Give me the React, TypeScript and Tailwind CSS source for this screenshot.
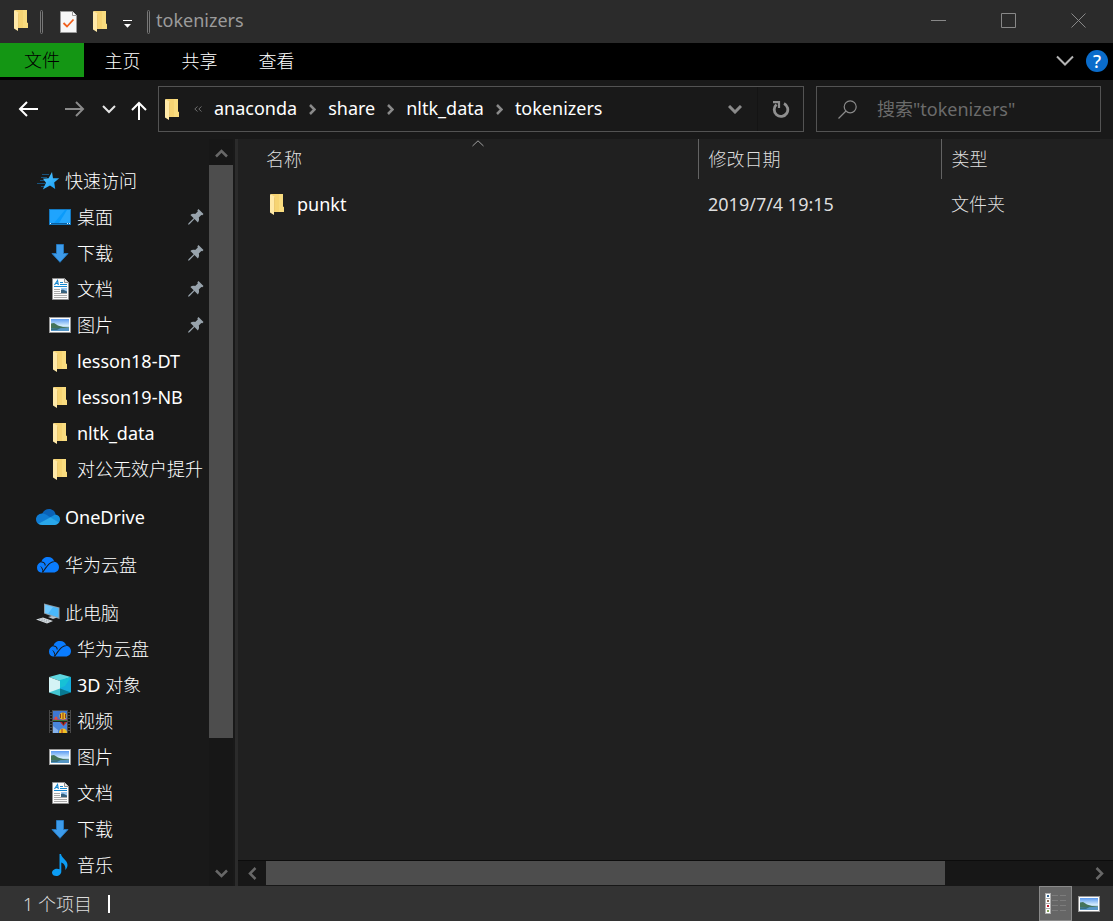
import { Fragment, ReactNode } from "react";

function FolderIcon() {
  return (
    <svg width="14" height="21" viewBox="0 0 14 21" aria-hidden="true" className="shrink-0">
      <path d="M1 0H13V12.5L14 13.5V18H1Z" fill="#f6d473" />
      <path d="M9 0H13V12.5L14 13.5V18H9Z" fill="#f9dc7f" />
      <path d="M0 0L4 2.2L5 3.5V18H4V21L0 18.6Z" fill="#ffe9a8" />
      <path d="M5 3.5V18H4.3V3Z" fill="#e6bd5a" />
    </svg>
  );
}

function CheckedPageIcon() {
  return (
    <svg width="17" height="22" viewBox="0 0 17 22" aria-hidden="true">
      <path d="M.5.5H12.5L16.5 4.5V21.5H.5Z" fill="#f7f7f7" stroke="#9a9a9a" />
      <path d="M12.5 .5V4.5H16.5" fill="#fff" stroke="#9a9a9a" />
      <path d="M3.5 12L7 15.5L13.5 8.5" fill="none" stroke="#f2611d" strokeWidth="1.8" />
    </svg>
  );
}

function StarIcon() {
  return (
    <svg width="24" height="18" viewBox="0 0 24 18" aria-hidden="true">
      <defs>
        <linearGradient id="star" x1="0" y1="0" x2="1" y2="1">
          <stop offset="0" stopColor="#5cc8ff" />
          <stop offset="1" stopColor="#0f9bf5" />
        </linearGradient>
      </defs>
      <path d="M6 2.5H13M5 5.5H11M4 8.5H10M1 11.5H9M5 14.5H9" stroke="#17527c" strokeWidth="1" />
      <path d="M16 0L17 6.2H23.2L18.2 10.4L19.2 17L14 13.4L6.8 17.5L10 10.8L7 6.8L12.6 6.2Z" fill="url(#star)" />
    </svg>
  );
}

function DesktopIcon() {
  return (
    <svg width="22" height="16" viewBox="0 0 22 16" aria-hidden="true">
      <rect x=".5" y=".5" width="21" height="15" fill="#0a9bfb" stroke="#1479c0" />
      <path d="M1 1H16L5 14H1Z" fill="#1fa4fe" />
      <path d="M18 1H21V14H10Z" fill="#28a8fd" />
      <path d="M1 14.5H21" stroke="#0b5f9e" />
      <path d="M1 14.5H2M18 14.5H19M20 14.5H21" stroke="#d8efff" />
    </svg>
  );
}

function DownloadIcon() {
  return (
    <svg width="18" height="19" viewBox="0 0 18 19" aria-hidden="true">
      <path d="M5.5.5H12.5V9.5H17L9 18.3L1 9.5H5.5Z" fill="#3d9bea" stroke="#2477bd" />
    </svg>
  );
}

function DocumentIcon() {
  return (
    <svg width="17" height="22" viewBox="0 0 17 22" aria-hidden="true">
      <path d="M.5.5H12.5L16.5 4.5V21.5H.5Z" fill="#fcfcfc" stroke="#8f8f8f" />
      <path d="M12.5.5V4.5H16.5" fill="#e7e7e7" stroke="#8f8f8f" />
      <path d="M2.5 7L5.5 2.5L6.3 7M4 5.5H6" fill="none" stroke="#1687cf" strokeWidth="1.2" />
      <path d="M8 4.5H11M8 6.5H15M2 8.5H15" stroke="#1687cf" />
      <path d="M2 11.5H8M2 13.5H8M2 15.5H15M2 17.5H15M2 19.5H15" stroke="#a9a9a9" />
      <rect x="9" y="10" width="6" height="5" fill="#9cc8f2" />
      <path d="M9 12L11 11.5L15 13.5V15H9Z" fill="#35617e" />
    </svg>
  );
}

function PictureIcon() {
  return (
    <svg width="22" height="16" viewBox="0 0 22 16" aria-hidden="true">
      <defs>
        <linearGradient id="sky" x1="0" y1="0" x2="0" y2="1">
          <stop offset="0" stopColor="#5b9bf2" />
          <stop offset=".55" stopColor="#d2ebfc" />
          <stop offset="1" stopColor="#3f7fb4" />
        </linearGradient>
      </defs>
      <rect x=".5" y=".5" width="21" height="15" fill="#fff" stroke="#989898" />
      <rect x="2" y="2" width="18" height="12" fill="url(#sky)" />
      <path d="M2 6.5L5 6L9 8.5L14 10L20 10.5V11.5L2 11.8Z" fill="#44745a" />
      <path d="M2 11.5L20 11V14H2Z" fill="#5596c6" />
      <path d="M2 11.5L12 10.8L8 13H2Z" fill="#376f7d" />
    </svg>
  );
}

function OneDriveIcon() {
  return (
    <svg width="24" height="16" viewBox="0 0 24 16" aria-hidden="true">
      <path d="M6 5C7.5 1.8 10 0 13 0C16.500 0 19 2.300 19.600 5.500L15 9Z" fill="#0a62b8" />
      <path d="M5.800 4.500C2.500 4.700 0 7.300 0 10.300C0 12.400 1 14 2.300 15L15 8.700L10 5.500C8.600 4.700 7.200 4.400 5.800 4.500Z" fill="#0f7cd4" />
      <path d="M14 8.500L19 5.500C22 5.600 24 7.800 24 10.300C24 12 23.500 13 22.700 14Z" fill="#1590df" />
      <path d="M2.200 14.800L14.500 8.200L23 13.600C22 15.200 20.500 16 19 16H6C4.500 16 3.300 15.600 2.200 14.800Z" fill="#29a7ea" />
    </svg>
  );
}

function HuaweiCloudIcon() {
  return (
    <svg width="22" height="16" viewBox="0 0 22 16" aria-hidden="true">
      <path
        d="M4.500 5C5 2 7.500 0 11 0C14.300 0 16.700 2 17.200 4.700C20 5 22 7.200 22 10C22 13.200 19.700 15.500 16.500 15.500H4C1.500 15.500 0 13.300 0 10.500C0 7.800 1.800 5.500 4.500 5Z"
        fill="#0a7cff"
      />
      <path
        d="M4.300 5C7 5 8.200 7 8.200 8.500M16.800 4.700C13 4.700 11.500 7.500 9.300 10.200L5.500 15.500"
        fill="none"
        stroke="#191919"
        strokeWidth="1.100"
      />
      <path d="M3.800 9.500C5.200 11 6 13 5.800 15" fill="none" stroke="#191919" />
    </svg>
  );
}

function ComputerIcon() {
  return (
    <svg width="24" height="21" viewBox="0 0 24 21" aria-hidden="true">
      <path d="M8 .5L23.500 4.500V16L8 10.500Z" fill="#8fa0ac" />
      <path d="M9 1.800L22.500 5.300V14.500L9 9.800Z" fill="#49b8fb" />
      <path d="M9 1.800L17 3.900L12 10.800L9 9.800Z" fill="#72caff" />
      <path d="M12 14L16 13L21 14.500L17 16Z" fill="#b9c2c9" />
      <path d="M0 16.500L7 14.500L17 18L11 20.500Z" fill="#d9dfe3" />
      <path d="M3 16.500L12 19.300M5.500 15.700L14.500 18.500" stroke="#8e999f" strokeWidth=".8" strokeDasharray="1.500 .8" />
    </svg>
  );
}

function CubeIcon() {
  return (
    <svg width="22" height="22" viewBox="0 0 22 22" aria-hidden="true">
      <path d="M0 3L11 0L22 3L11 7Z" fill="#5fd6e0" />
      <path d="M0 3L11 7V18L0 18.500Z" fill="#d4f3f5" />
      <path d="M22 3L11 7V17L22 18.500Z" fill="#15aede" />
      <path d="M11 6L22 3L16 12L11 14Z" fill="#16c1d6" />
      <path d="M0 18.500L11 14.500V22Z" fill="#43c5d1" />
      <path d="M22 18.500L11 14.500V22Z" fill="#087992" />
    </svg>
  );
}

function VideoIcon() {
  return (
    <svg width="22" height="23" viewBox="0 0 22 23" aria-hidden="true">
      <rect width="22" height="23" fill="#4a4a4a" />
      <path d="M2 0V23M20 0V23" stroke="#151515" strokeWidth="2" strokeDasharray="2 1" />
      <rect x="4" y="1" width="14" height="10" fill="#3f78d4" />
      <rect x="4" y="12" width="14" height="11" fill="#4a86dc" />
      <path d="M4 9L7 8L11 9.500L18 9V11H4Z" fill="#a34b78" />
      <path d="M4 10H18V11H4Z" fill="#3d7c3c" />
      <path d="M4 11.500H18" stroke="#222" />
      <circle cx="14" cy="6" r="3.500" fill="#efb821" />
      <path d="M14 2.500V9M11.500 4V8M16.500 4V8" stroke="#8a3a1d" />
      <circle cx="7" cy="8" r="1.500" fill="#e2503c" />
      <path d="M11 12H18L14.500 16Z" fill="#c02920" />
      <path d="M13 12H15.500L14.500 15Z" fill="#26251d" />
      <path d="M10 23C10 20 11.500 18.500 14 18.500C16.500 18.500 18 20 18 23Z" fill="#efc026" />
      <path d="M13 19V23" stroke="#b5321d" />
      <path d="M4 16L9 20V23H4Z" fill="#86b3ec" />
    </svg>
  );
}

function MusicIcon() {
  return (
    <svg width="16" height="22" viewBox="0 0 16 22" aria-hidden="true">
      <path
        d="M7.500 0H9C9.500 4 15.500 6 15.500 11C15.500 13 14.500 14.800 13.300 16C14 12 12 9.500 9.300 8.500V17.500C9.300 20 7 22 4.300 22C2 22 0 20.700 0 18.700C0 16.500 2.400 14.700 5 14.700C6 14.700 6.900 14.900 7.500 15.200Z"
        fill="#0c9cf3"
      />
    </svg>
  );
}

function PinIcon() {
  return (
    <svg width="16" height="16" viewBox="0 0 16 16" aria-hidden="true">
      <path
        d="M10.500 0L15.500 5L14.300 6.200L13.300 6L10.800 8.500C11.400 10.500 11 12 9.900 13.400L6.500 10L1.500 15.200L0 15.700L.5 14.200L5.700 9.200L2.400 6C3.600 4.700 5.300 4.400 7.200 5L9.800 2.500L9.400 1.200Z"
        fill="#98a3ac"
      />
    </svg>
  );
}

function Chevron({ d, w, h, color, stroke = 2 }: { d: string; w: number; h: number; color: string; stroke?: number }) {
  return (
    <svg width={w} height={h} viewBox={`0 0 ${w} ${h}`} fill="none" stroke={color} strokeWidth={stroke} aria-hidden="true">
      <path d={d} />
    </svg>
  );
}

/** Latin runs are set in the regular weight, Chinese runs inherit the light one. */
function MixedText({ text }: { text: string }) {
  return (
    <>
      {text.split(/([\x20-\x7e]+)/).map((run, i) =>
        i % 2 ? (
          <span key={i} className="font-normal">
            {run}
          </span>
        ) : (
          run
        ),
      )}
    </>
  );
}

type Entry = { label: string; icon: ReactNode; nested?: boolean; pinned?: boolean; gap?: boolean };

const entries: Entry[] = [
  { label: "快速访问", icon: <StarIcon /> },
  { label: "桌面", icon: <DesktopIcon />, nested: true, pinned: true },
  { label: "下载", icon: <DownloadIcon />, nested: true, pinned: true },
  { label: "文档", icon: <DocumentIcon />, nested: true, pinned: true },
  { label: "图片", icon: <PictureIcon />, nested: true, pinned: true },
  { label: "lesson18-DT", icon: <FolderIcon />, nested: true },
  { label: "lesson19-NB", icon: <FolderIcon />, nested: true },
  { label: "nltk_data", icon: <FolderIcon />, nested: true },
  { label: "对公无效户提升", icon: <FolderIcon />, nested: true },
  { label: "OneDrive", icon: <OneDriveIcon />, gap: true },
  { label: "华为云盘", icon: <HuaweiCloudIcon />, gap: true },
  { label: "此电脑", icon: <ComputerIcon />, gap: true },
  { label: "华为云盘", icon: <HuaweiCloudIcon />, nested: true },
  { label: "3D 对象", icon: <CubeIcon />, nested: true },
  { label: "视频", icon: <VideoIcon />, nested: true },
  { label: "图片", icon: <PictureIcon />, nested: true },
  { label: "文档", icon: <DocumentIcon />, nested: true },
  { label: "下载", icon: <DownloadIcon />, nested: true },
  { label: "音乐", icon: <MusicIcon />, nested: true },
];

const crumbs = ["anaconda", "share", "nltk_data", "tokenizers"];

function TitleBar() {
  return (
    <header className="flex h-[43px] items-center bg-[#2b2b2b] pb-0.5 pl-3.5">
      <FolderIcon />
      <div className="flex items-center pt-0.5">
        <span className="ml-3 h-6 w-[3px] rounded-sm border border-[#777]" />
        <button aria-label="属性" className="ml-[17px]">
          <CheckedPageIcon />
        </button>
        <button aria-label="新建文件夹" className="ml-4">
          <FolderIcon />
        </button>
        <button aria-label="自定义快速访问工具栏" className="ml-4 pt-1">
          <svg width="9" height="8" viewBox="0 0 9 8" aria-hidden="true">
            <path d="M0 .5H9" stroke="#fff" />
            <path d="M1 4H8L4.500 7.800Z" fill="#fff" />
          </svg>
        </button>
        <span className="ml-[15px] h-6 w-[3px] rounded-sm border border-[#777]" />
      </div>
      <h1 className="ml-1.5 flex-1 pb-0.5 leading-6 font-normal text-[#9b9b9b]">tokenizers</h1>
      <div className="flex">
        <button aria-label="最小化" className="flex h-10 w-[70px] items-center justify-center">
          <Chevron d="M0 .5H15" w={15} h={1} color="#888" stroke={1} />
        </button>
        <button aria-label="最大化" className="flex h-10 w-[70px] items-center justify-center">
          <Chevron d="M.5 .5H14.500V14.500H.5Z" w={15} h={15} color="#888" stroke={1} />
        </button>
        <button aria-label="关闭" className="flex h-10 w-[70px] items-center justify-center">
          <Chevron d="M.5 .5L14.500 14.500M14.500 .5L.5 14.500" w={15} h={15} color="#888" stroke={1} />
        </button>
      </div>
    </header>
  );
}

function Ribbon() {
  return (
    <nav className="flex h-[37px] items-start bg-black">
      <button className="h-[34px] w-[84px] bg-[#149614] text-black">文件</button>
      {["主页", "共享", "查看"].map((t) => (
        <button key={t} className="h-9 w-[77px] text-white">
          {t}
        </button>
      ))}
      <button aria-label="展开功能区" className="ml-auto flex h-9 w-6 items-center justify-center">
        <Chevron d="M1 1.500L9 9.500L17 1.500" w={18} h={12} color="#b4b4b4" stroke={2} />
      </button>
      <button aria-label="帮助" className="mr-[5px] ml-[9px] flex h-9 items-center">
        <span className="flex size-[22px] items-center justify-center rounded-full bg-[#0a6ccb] font-medium text-white">?</span>
      </button>
    </nav>
  );
}

function AddressRow() {
  return (
    <div className="flex h-[59px] items-start bg-[#191919] pt-1.5 pr-3">
      <div className="flex h-[46px] w-[158px] shrink-0 items-center pl-[18px]">
        <button aria-label="后退">
          <Chevron d="M20 8H2M9 1L2 8L9 15" w={21} h={16} color="#fff" />
        </button>
        <button aria-label="前进" className="ml-[26px]">
          <Chevron d="M0 8H18M11 1L18 8L11 15" w={21} h={16} color="#8a8a8a" />
        </button>
        <button aria-label="最近浏览的位置" className="ml-4">
          <Chevron d="M1 1L7 7L13 1" w={14} h={9} color="#e4e4e4" />
        </button>
        <button aria-label="上移" className="ml-[15px] pt-0.5">
          <Chevron d="M8 19V2M1 9L8 2L15 9" w={16} h={19} color="#fff" />
        </button>
      </div>
      <div className="flex h-[46px] min-w-0 flex-1 items-center border border-[#535353] pl-1.5">
        <FolderIcon />
        <span className="ml-[15px]">
          <Chevron d="M3.500 .5L.8 3L3.500 5.500M7.500 .5L4.800 3L7.500 5.500" w={8} h={6} color="#6e6e6e" stroke={1} />
        </span>
        <ol className="ml-3 flex items-center gap-3 pb-0.5 font-normal text-white">
          {crumbs.map((c, i) => (
            <Fragment key={c}>
              {i > 0 && (
                <li aria-hidden="true" className="pt-0.5">
                  <Chevron d="M1 1L5.500 5.500L1 10" w={7} h={11} color="#8a8a8a" stroke={2.5} />
                </li>
              )}
              <li>
                <a href="#">{c}</a>
              </li>
            </Fragment>
          ))}
        </ol>
        <button aria-label="以前的位置" className="ml-auto flex h-full w-[44px] items-center justify-center">
          <Chevron d="M1 1L7 7L13 1" w={14} h={9} color="#8a8a8a" stroke={3} />
        </button>
        <button aria-label="刷新" className="flex h-full w-[46px] items-center justify-center border-l border-[#141414]">
          <svg width="18" height="18" viewBox="0 0 18 18" fill="none" aria-hidden="true">
            <path d="M12 3.500A6.800 6.800 0 1 1 4.500 4.500" stroke="#8f8f8f" strokeWidth="2.800" />
            <path d="M1 2.200H7V8" stroke="#8f8f8f" strokeWidth="2.200" />
          </svg>
        </button>
      </div>
      <label className="ml-3 flex h-[46px] w-[285px] shrink-0 items-center border border-[#535353] pl-[21px]">
        <svg width="19" height="19" viewBox="0 0 19 19" fill="none" stroke="#8a8a8a" strokeWidth="1.200" aria-hidden="true">
          <circle cx="12.200" cy="6.800" r="6" />
          <path d="M8 11L.5 18.500" />
        </svg>
        <input
          aria-label="搜索"
          placeholder={'搜索"tokenizers"'}
          className="ml-5 min-w-0 flex-1 bg-transparent font-normal text-white outline-none placeholder:text-[#6b6b6b]"
        />
      </label>
    </div>
  );
}

function Sidebar() {
  return (
    <aside className="flex w-[235px] shrink-0 bg-[#191919]">
      <ul className="min-w-0 flex-1 pt-6 pb-[3px]">
        {entries.map((e, i) => (
          <li key={i} className={e.gap ? "mt-3" : ""}>
            <a href="#" className={`flex h-9 items-center whitespace-nowrap text-white ${e.nested ? "pl-12" : "pl-9"}`}>
              <span className="flex w-6 shrink-0 justify-center">{e.icon}</span>
              <span className="ml-[5px] flex-1">
                <MixedText text={e.label} />
              </span>
              {e.pinned && (
                <span className="pr-[5px]">
                  <PinIcon />
                </span>
              )}
            </a>
          </li>
        ))}
      </ul>
      <div className="mr-0.5 flex w-6 flex-col bg-[#171717]">
        <button aria-label="向上滚动" className="flex h-[26px] items-center justify-center pt-0.5">
          <Chevron d="M1 7.500L6.500 2L12 7.500" w={13} h={9} color="#686868" stroke={2.5} />
        </button>
        <div className="flex-1">
          <div className="h-[82.5%] bg-[#4d4d4d]" />
        </div>
        <button aria-label="向下滚动" className="flex h-[26px] items-center justify-center">
          <Chevron d="M1 1.500L6.500 7L12 1.500" w={13} h={9} color="#686868" stroke={2.5} />
        </button>
      </div>
    </aside>
  );
}

function FileList() {
  return (
    <main className="flex min-w-0 flex-1 flex-col bg-[#202020]">
      <table className="w-full table-fixed border-collapse text-left text-[#dedede]">
        <colgroup>
          <col className="w-[460px]" />
          <col className="w-[243px]" />
          <col />
        </colgroup>
        <thead>
          <tr className="h-10">
            <th className="relative border-r border-[#636363] pl-7 font-light">
              名称
              <span className="absolute top-px left-1/2 flex -translate-x-1/2 pl-5">
                <Chevron d="M.5 6L6 .8L11.500 6" w={12} h={7} color="#a0a0a0" stroke={1} />
              </span>
            </th>
            <th className="border-r border-[#636363] pl-2.5 font-light">修改日期</th>
            <th className="pl-2.5 font-light">类型</th>
          </tr>
        </thead>
        <tbody>
          <tr className="h-[50px]">
            <td className="pl-8">
              <a href="#" className="flex items-center gap-[13px] font-normal text-white">
                <FolderIcon />
                punkt
              </a>
            </td>
            <td className="pl-2.5 font-normal">2019/7/4 19:15</td>
            <td className="pl-2.5">文件夹</td>
          </tr>
        </tbody>
      </table>
      <div className="mt-auto flex h-[26px] items-stretch border-t border-[#0c0c0c] bg-[#171717]">
        <button aria-label="向左滚动" className="flex w-7 items-center justify-center">
          <Chevron d="M7.500 1L2 6.500L7.500 12" w={9} h={13} color="#686868" stroke={2.5} />
        </button>
        <div className="flex-1">
          <div className="h-6 w-[82.9%] bg-[#4d4d4d]" />
        </div>
        <button aria-label="向右滚动" className="flex w-7 items-center justify-center">
          <Chevron d="M1.500 1L7 6.500L1.500 12" w={9} h={13} color="#686868" stroke={2.5} />
        </button>
      </div>
    </main>
  );
}

function StatusBar() {
  return (
    <footer className="flex h-[35px] items-center bg-[#333] pl-[23px] text-[#dedede]">
      <span>1 个项目</span>
      <span className="ml-4 h-[18px] w-0.5 bg-white" />
      <button aria-label="详细信息" className="ml-auto flex h-full w-[33px] items-center justify-center border border-[#8a8a8a] bg-[#666]">
        <svg width="21" height="21" viewBox="0 0 21 21" aria-hidden="true">
          <path d="M0 0H6V21H0Z" fill="#b0b0b0" />
          <path d="M1 1H5V5H1ZM1 6H5V10H1ZM1 11H5V15H1ZM1 16H5V20H1Z" fill="#fff" />
          <path d="M2 2H4V4H2Z" fill="#2f6b9c" />
          <path d="M2 7H4V9H2Z" fill="#8a6a54" />
          <path d="M2 12H4V14H2Z" fill="#c8202a" />
          <path d="M2 17H4V19H2Z" fill="#86a35b" />
          <path d="M7 2.500H13M15 2.500H21M7 7.500H13M15 7.500H21M7 12.500H13M15 12.500H21M7 17.500H13M15 17.500H21" stroke="#7c7c7c" />
        </svg>
      </button>
      <button aria-label="大缩略图" className="flex h-full w-[41px] items-center pl-1.5">
        <PictureIcon />
      </button>
    </footer>
  );
}

export default function App() {
  return (
    <div className="flex min-h-screen flex-col bg-[#191919] font-['Noto_Sans','Noto_Sans_CJK_SC',sans-serif] text-[18px] leading-6 font-light">
      <TitleBar />
      <Ribbon />
      <AddressRow />
      <div className="flex flex-1">
        <Sidebar />
        <div className="w-[3px] shrink-0 bg-[#2b2b2b]" />
        <FileList />
      </div>
      <StatusBar />
    </div>
  );
}
